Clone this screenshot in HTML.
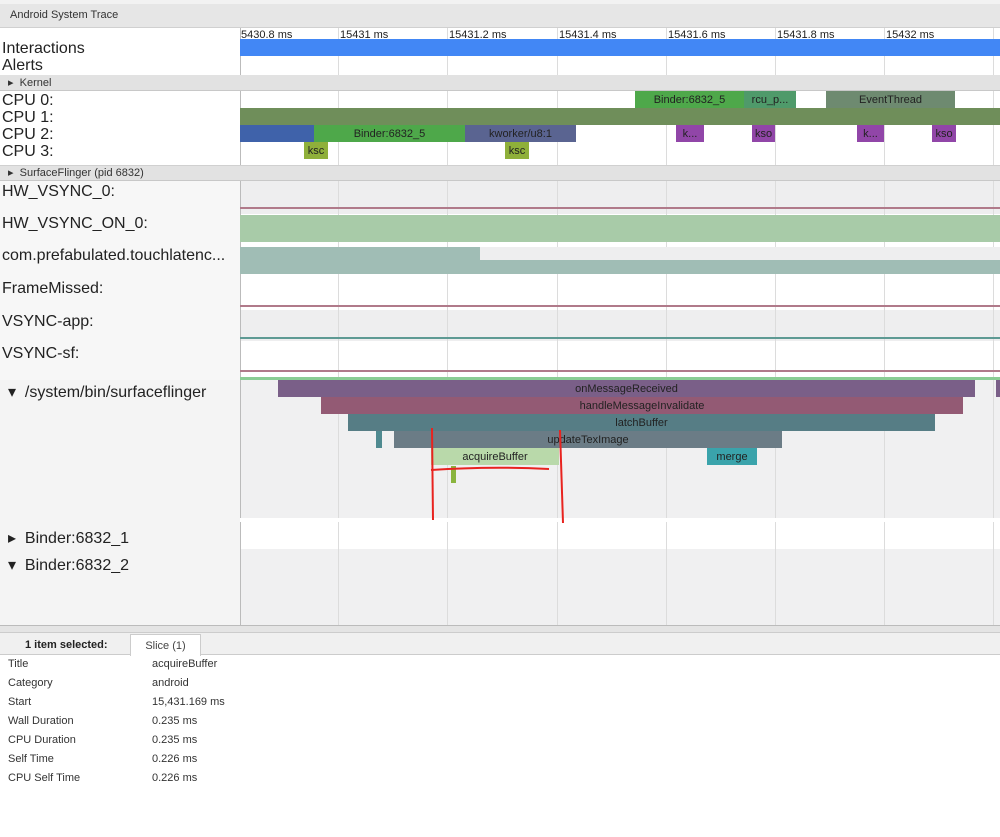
<!DOCTYPE html>
<html><head><meta charset="utf-8"><style>
*{margin:0;padding:0;box-sizing:border-box}
body{width:1000px;height:837px;background:#fff;font-family:"Liberation Sans",sans-serif;position:relative;overflow:hidden;color:#222}
.a{position:absolute}
.lbl{position:absolute;left:2px;font-size:16px;color:#222;white-space:nowrap}
.s{position:absolute;font-size:11px;color:#222;text-align:center;line-height:19px;overflow:hidden;white-space:nowrap}
.g{position:absolute;top:28px;width:1px;height:597px;background:#dcdcdc}
.tk{position:absolute;top:29px;font-size:11px;color:#222;white-space:nowrap}
.dt{position:absolute;left:8px;font-size:11px;color:#333}
.dv{position:absolute;left:152px;font-size:11px;color:#333}
</style></head><body>
<div class="a" style="left:0;top:0;width:1000px;height:4px;background:#f2f2f2"></div>
<div class="a" style="left:0;top:4px;width:1000px;height:24px;background:#e6e6e6;border-bottom:1px solid #d0d0d0"></div>
<div class="a" style="left:10px;top:9px;font-size:11px;color:#333">Android System Trace</div>
<div class="a" style="left:0;top:28px;width:240px;height:597px;background:#f7f7f7"></div>
<div class="a" style="left:0;top:28px;width:240px;height:47px;background:#fff"></div>
<div class="a" style="left:0;top:90px;width:240px;height:75px;background:#fff"></div>
<div class="a" style="left:240px;top:28px;width:760px;height:597px;background:#fff"></div>
<div class="a" style="left:240px;top:181px;width:760px;height:33px;background:#eeeeef"></div>
<div class="a" style="left:240px;top:310px;width:760px;height:31px;background:#eeeeef"></div>
<div class="a" style="left:240px;top:380px;width:760px;height:140px;background:#f0f0f1"></div>
<div class="a" style="left:240px;top:549px;width:760px;height:76px;background:#f0f0f1"></div>
<div class="a" style="left:0;top:380px;width:240px;height:245px;background:#f4f4f4"></div>
<div class="g" style="left:338px"></div><div class="g" style="left:447px"></div><div class="g" style="left:557px"></div><div class="g" style="left:666px"></div><div class="g" style="left:775px"></div><div class="g" style="left:884px"></div><div class="g" style="left:993px"></div>
<div class="a" style="left:240px;top:28px;width:1px;height:597px;background:#bbb"></div>
<div class="tk" style="left:241px">5430.8 ms</div><div class="tk" style="left:340px">15431 ms</div><div class="tk" style="left:449px">15431.2 ms</div><div class="tk" style="left:559px">15431.4 ms</div><div class="tk" style="left:668px">15431.6 ms</div><div class="tk" style="left:777px">15431.8 ms</div><div class="tk" style="left:886px">15432 ms</div>
<div class="a" style="left:240px;top:39px;width:760px;height:17px;background:#4287f5"></div>
<div class="lbl" style="top:40px">Interactions</div>
<div class="lbl" style="top:57px">Alerts</div>
<div class="a" style="left:0;top:75px;width:1000px;height:16px;background:#e2e2e2;border-bottom:1px solid #c8c8c8"></div>
<div class="a" style="left:8px;top:76px;font-size:11px;color:#333">▸&nbsp; Kernel</div>
<div class="lbl" style="top:92px">CPU 0:</div><div class="lbl" style="top:109px">CPU 1:</div><div class="lbl" style="top:126px">CPU 2:</div><div class="lbl" style="top:143px">CPU 3:</div>
<div class="s" style="left:635px;top:91px;width:109px;height:17px;background:#4ea84a">Binder:6832_5</div>
<div class="s" style="left:744px;top:91px;width:52px;height:17px;background:#4f9a6a">rcu_p...</div>
<div class="s" style="left:826px;top:91px;width:129px;height:17px;background:#6e8a70">EventThread</div>
<div class="a" style="left:240px;top:108px;width:760px;height:17px;background:#6f8e5a"></div>
<div class="a" style="left:240px;top:125px;width:74px;height:17px;background:#3f62aa"></div>
<div class="s" style="left:314px;top:125px;width:151px;height:17px;background:#4ea84a">Binder:6832_5</div>
<div class="s" style="left:465px;top:125px;width:111px;height:17px;background:#5a6491">kworker/u8:1</div>
<div class="s" style="left:676px;top:125px;width:28px;height:17px;background:#9146a8">k...</div>
<div class="s" style="left:752px;top:125px;width:23px;height:17px;background:#9146a8">kso</div>
<div class="s" style="left:857px;top:125px;width:27px;height:17px;background:#9146a8">k...</div>
<div class="s" style="left:932px;top:125px;width:24px;height:17px;background:#9146a8">kso</div>
<div class="s" style="left:304px;top:142px;width:24px;height:17px;background:#8fb03a">ksc</div>
<div class="s" style="left:505px;top:142px;width:24px;height:17px;background:#8fb03a">ksc</div>
<div class="a" style="left:0;top:165px;width:1000px;height:16px;background:#e2e2e2;border-bottom:1px solid #c8c8c8;border-top:1px solid #d0d0d0"></div>
<div class="a" style="left:8px;top:166px;font-size:11px;color:#333">▸&nbsp; SurfaceFlinger (pid 6832)</div>
<div class="lbl" style="top:183px">HW_VSYNC_0:</div>
<div class="a" style="left:240px;top:207px;width:760px;height:2px;background:#b07a8a"></div>
<div class="lbl" style="top:215px">HW_VSYNC_ON_0:</div>
<div class="a" style="left:240px;top:215px;width:760px;height:27px;background:#a8cba8"></div>
<div class="lbl" style="top:247px">com.prefabulated.touchlatenc...</div>
<div class="a" style="left:240px;top:247px;width:760px;height:27px;background:#a0bdb5"></div>
<div class="a" style="left:480px;top:247px;width:520px;height:13px;background:#eeeeef"></div>
<div class="lbl" style="top:280px">FrameMissed:</div>
<div class="a" style="left:240px;top:305px;width:760px;height:2px;background:#b07a8a"></div>
<div class="lbl" style="top:313px">VSYNC-app:</div>
<div class="a" style="left:240px;top:337px;width:760px;height:2px;background:#5e9a94"></div>
<div class="lbl" style="top:345px">VSYNC-sf:</div>
<div class="a" style="left:240px;top:370px;width:760px;height:2px;background:#b07a8a"></div>
<div class="a" style="left:240px;top:377px;width:760px;height:3px;background:#8acc94"></div>
<div class="lbl" style="top:382px;left:8px">▾&nbsp; /system/bin/surfaceflinger</div>
<div class="s" style="left:278px;top:380px;width:697px;height:17px;background:#7a5f88">onMessageReceived</div>
<div class="a" style="left:996px;top:380px;width:4px;height:17px;background:#7a5f88"></div>
<div class="s" style="left:321px;top:397px;width:642px;height:17px;background:#935a74">handleMessageInvalidate</div>
<div class="s" style="left:348px;top:414px;width:587px;height:17px;background:#567d85">latchBuffer</div>
<div class="a" style="left:376px;top:431px;width:6px;height:17px;background:#4f8a90"></div>
<div class="s" style="left:394px;top:431px;width:388px;height:17px;background:#6b7c86">updateTexImage</div>
<div class="s" style="left:431px;top:448px;width:128px;height:17px;background:#b9d9aa">acquireBuffer</div>
<div class="s" style="left:707px;top:448px;width:50px;height:17px;background:#3aa3ab">merge</div>
<div class="a" style="left:451px;top:466px;width:5px;height:17px;background:#8ab43e"></div>
<div class="a" style="left:240px;top:518px;width:760px;height:4px;background:#fff"></div>
<svg class="a" style="left:0;top:0" width="1000" height="837"><g stroke="#e8231f" stroke-width="2" fill="none"><path d="M432 428 L433 520"/><path d="M560 430 L563 523"/><path d="M431 470 Q490 466 549 469"/></g></svg>
<div class="lbl" style="top:528px;left:8px">▸&nbsp; Binder:6832_1</div>
<div class="lbl" style="top:555px;left:8px">▾&nbsp; Binder:6832_2</div>
<div class="a" style="left:0;top:625px;width:1000px;height:8px;background:#e4e4e4;border-top:1px solid #bbb;border-bottom:1px solid #ccc"></div>
<div class="a" style="left:0;top:633px;width:1000px;height:22px;background:#f0f0f0;border-bottom:1px solid #ccc"></div>
<div class="a" style="left:25px;top:639px;font-size:11px;font-weight:bold;color:#222">1 item selected:</div>
<div class="a" style="left:130px;top:634px;width:71px;height:22px;background:#fff;border:1px solid #ccc;border-bottom:none;font-size:11px;color:#444;text-align:center;line-height:22px">Slice (1)</div>
<div class="dt" style="top:658px">Title</div><div class="dv" style="top:658px">acquireBuffer</div>
<div class="dt" style="top:677px">Category</div><div class="dv" style="top:677px">android</div>
<div class="dt" style="top:696px">Start</div><div class="dv" style="top:696px">15,431.169 ms</div>
<div class="dt" style="top:715px">Wall Duration</div><div class="dv" style="top:715px">0.235 ms</div>
<div class="dt" style="top:734px">CPU Duration</div><div class="dv" style="top:734px">0.235 ms</div>
<div class="dt" style="top:753px">Self Time</div><div class="dv" style="top:753px">0.226 ms</div>
<div class="dt" style="top:772px">CPU Self Time</div><div class="dv" style="top:772px">0.226 ms</div>
</body></html>
